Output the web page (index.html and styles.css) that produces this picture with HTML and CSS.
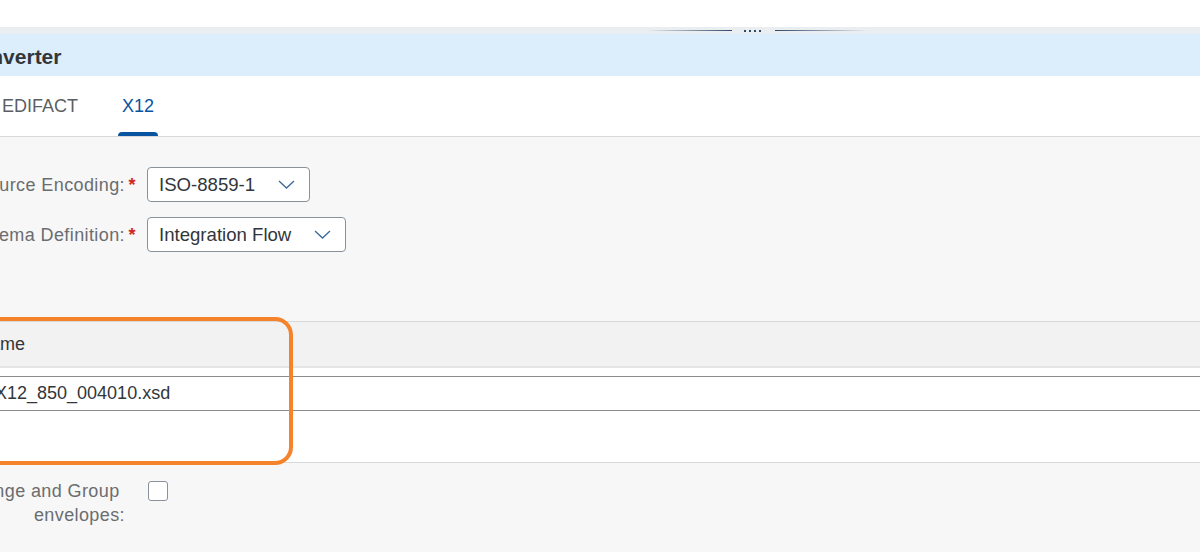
FILE: index.html
```html
<!DOCTYPE html>
<html lang="en">
<head>
<meta charset="utf-8">
<title>EDI to XML Converter</title>
<link rel="stylesheet" href="styles.css">
</head>
<body>
<div class="app">
  <div class="topbar"></div>
  <div class="splitbar">
    <span class="line line-left"></span>
    <span class="dots"><i></i><i></i><i></i><i></i></span>
    <span class="line line-right"></span>
  </div>
  <div class="title-bar"><h1 class="title">EDI to XML Converter</h1></div>
  <div class="tabbar">
    <div class="tab">EDIFACT</div>
    <div class="tab tab-active">X12</div>
  </div>

  <div class="form">
    <div class="label"><span>Source Encoding:</span><span class="star">*</span></div>
    <div class="field">
      <div class="select">
        <span class="select-text">ISO-8859-1</span>
        <svg class="chev" width="17" height="9" viewBox="0 0 17 9"><path d="M1 1 L8.5 8 L16 1" fill="none" stroke="#3b6a98" stroke-width="1.3"/></svg>
      </div>
    </div>
    <div class="label"><span>Schema Definition:</span><span class="star">*</span></div>
    <div class="field">
      <div class="select">
        <span class="select-text">Integration Flow</span>
        <svg class="chev" width="17" height="9" viewBox="0 0 17 9"><path d="M1 1 L8.5 8 L16 1" fill="none" stroke="#3b6a98" stroke-width="1.3"/></svg>
      </div>
    </div>
  </div>

  <div class="table-wrap">
    <div class="thead"><span class="th">Name</span></div>
    <div class="trow">
      <div class="cell-input">X12_850_004010.xsd</div>
    </div>
    <div class="highlight"></div>
  </div>

  <div class="form form-check">
    <div class="label label-top"><span>Exclude Interchange and Group&nbsp; envelopes:</span><span class="star"></span></div>
    <div class="field field-top"><span class="checkbox"></span></div>
  </div>
</div>
</body>
</html>
```

FILE: styles.css
```css
html, body {
  margin: 0;
  padding: 0;
  overflow: hidden;
  background: #f7f7f7;
  font-family: "Liberation Sans", Arial, sans-serif;
  color: #32363a;
}

.app {
  margin-left: -160px;
  width: 1520px;
}

.topbar {
  height: 27px;
  background: #ffffff;
}

.splitbar {
  height: 7px;
  background: #ebeef1;
  display: flex;
  align-items: center;
  padding-left: 807px;
}

.line {
  height: 1px;
}

.line-left {
  width: 85px;
  background: linear-gradient(to right, rgba(46, 74, 107, 0), #2e4a6b);
}

.line-right {
  width: 92px;
  background: linear-gradient(to right, #2e4a6b, rgba(46, 74, 107, 0));
}

.dots {
  display: flex;
  gap: 3px;
  margin: 0 14px 0 12px;
}

.dots i {
  width: 2px;
  height: 2px;
  background: #2e4a6b;
}

.title-bar {
  height: 42px;
  box-sizing: border-box;
  padding-top: 4px;
  background: #dcedfc;
  display: flex;
  align-items: center;
  padding-left: 6px;
}

.title {
  margin: 0;
  font-size: 21px;
  font-weight: bold;
  color: #32363a;
  white-space: nowrap;
}

.tabbar {
  height: 60px;
  background: #ffffff;
  border-bottom: 1px solid #d9d9d9;
  display: flex;
  gap: 36px;
  padding-left: 158px;
}

.tab {
  position: relative;
  padding: 0 4px;
  display: flex;
  align-items: center;
  font-size: 18px;
  color: #5b5f63;
}

.tab-active {
  color: #0854a0;
}

.tab-active::after {
  content: "";
  position: absolute;
  left: 0;
  right: 0;
  bottom: 0;
  height: 4px;
  background: #0854a0;
  border-radius: 4px 4px 0 0;
}

.form {
  display: grid;
  grid-template-columns: 296px auto;
  column-gap: 11px;
  row-gap: 15px;
  padding: 30px 0 69px;
  align-items: center;
}

.label {
  display: flex;
  justify-content: flex-end;
  text-align: right;
  font-size: 18px;
  letter-spacing: 0.4px;
  color: #6a6d70;
  line-height: 24px;
}

.star {
  width: 11px;
  flex: none;
  padding-left: 3px;
  box-sizing: border-box;
  color: #d0271d;
  font-weight: bold;
}

.field {
  display: flex;
}

.select {
  display: inline-flex;
  align-items: center;
  height: 35px;
  box-sizing: border-box;
  border: 1px solid #89919a;
  border-radius: 4px;
  background: #ffffff;
  padding: 0 14px 0 11px;
  font-size: 18.6px;
  color: #32363a;
}

.chev {
  margin-left: 23px;
}

.table-wrap {
  position: relative;
  margin-left: 121px;
  background: #ffffff;
  border-top: 1px solid #d9d9d9;
  border-bottom: 1px solid #d9d9d9;
}

.thead {
  height: 44px;
  background: #f2f2f2;
  border-bottom: 2px solid #e5e5e5;
  display: flex;
  align-items: center;
  padding-left: 16px;
  font-size: 18px;
  color: #32363a;
}

.trow {
  padding: 8px 0 51px 16px;
}

.cell-input {
  height: 35px;
  box-sizing: border-box;
  border: 1px solid #8c8c8c;
  border-radius: 3px;
  display: flex;
  align-items: center;
  padding-left: 17px;
  font-size: 18px;
  color: #32363a;
  background: #ffffff;
}

.highlight {
  position: absolute;
  top: -5px;
  left: 9px;
  width: 323px;
  height: 148px;
  box-sizing: border-box;
  border: 4px solid #f4832b;
  border-radius: 18px;
  pointer-events: none;
}

.form-check {
  padding: 16px 0 0;
  align-items: start;
}

.field-top {
  padding-top: 2px;
}

.checkbox {
  display: block;
  width: 20px;
  height: 20px;
  margin-left: 1px;
  box-sizing: border-box;
  border: 1px solid #89919a;
  border-radius: 3px;
  background: #ffffff;
}
```
